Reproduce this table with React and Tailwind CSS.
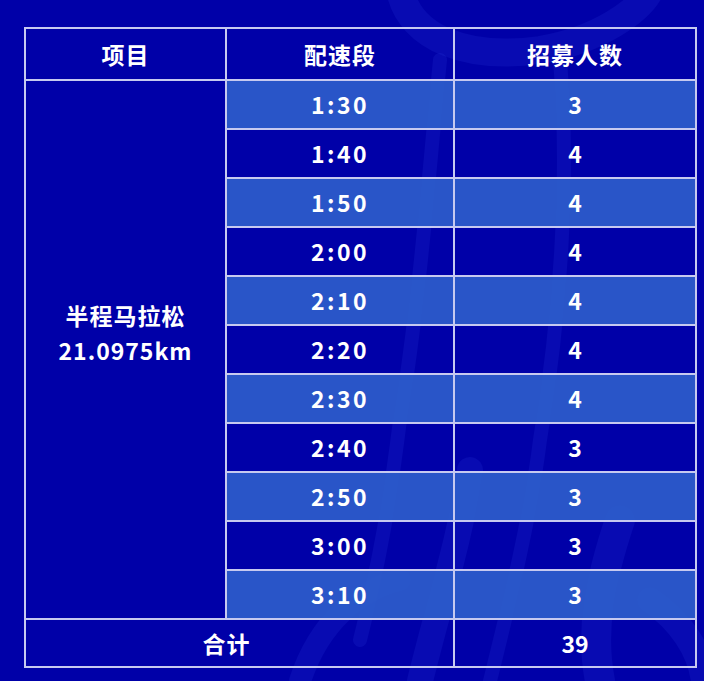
import React from "react";

const paces = [
  ["1:30", 3],
  ["1:40", 4],
  ["1:50", 4],
  ["2:00", 4],
  ["2:10", 4],
  ["2:20", 4],
  ["2:30", 4],
  ["2:40", 3],
  ["2:50", 3],
  ["3:00", 3],
  ["3:10", 3],
];

const font = { fontFamily: '"Noto Sans CJK SC", "Noto Sans", sans-serif' };

// faint runner silhouette behind the table
const Backdrop = () => (
  <svg className="absolute inset-0 w-full h-full" viewBox="0 0 704 681" fill="none">
    <g stroke="#3047e6" strokeOpacity="0.16" strokeLinecap="round">
      <path d="M400 -10 C410 40 470 60 540 50 C600 40 640 10 650 -10" strokeWidth="28" />
      <path d="M440 60 C430 160 420 300 400 420 C390 500 380 560 360 640" strokeWidth="14" />
      <path d="M560 60 C570 180 560 320 540 440 C530 520 510 600 490 681" strokeWidth="14" />
      <path d="M470 470 C460 540 440 600 420 681" strokeWidth="26" />
      <path d="M620 520 C600 580 590 630 600 681" strokeWidth="30" />
      <path d="M300 681 C320 620 360 590 400 580" strokeWidth="22" />
      <path d="M650 600 C680 620 700 650 704 681" strokeWidth="26" />
    </g>
  </svg>
);

export default function App() {
  return (
    <div className="relative w-[704px] h-[681px] overflow-hidden bg-[#0000a8] text-white" style={font}>
      <Backdrop />
      <div className="relative pt-[27px] pl-[24px]">
        <table className="border-collapse border-2 border-[#c6c9f0] table-fixed w-[671px]">
          <colgroup>
            <col className="w-[201px]" />
            <col className="w-[228px]" />
            <col className="w-[242px]" />
          </colgroup>
          <thead>
            <tr className="h-[52px]">
              <th className="border-2 border-[#c6c9f0] text-[23px] font-bold tracking-[1px] p-0">项目</th>
              <th className="border-2 border-[#c6c9f0] text-[23px] font-bold tracking-[1px] p-0">配速段</th>
              <th className="border-2 border-[#c6c9f0] text-[23px] font-bold tracking-[1px] p-0">招募人数</th>
            </tr>
          </thead>
          <tbody>
            {paces.map(([pace, count], i) => (
              <tr key={pace} className="h-[49px]">
                {i === 0 && (
                  <td
                    rowSpan={paces.length}
                    className="border-2 border-[#c6c9f0] p-0 text-center align-middle"
                  >
                    <div className="pb-[34px] text-[23px] font-semibold leading-[35px] tracking-[1px]">
                      <div>半程马拉松</div>
                      <div>21.0975km</div>
                    </div>
                  </td>
                )}
                <td
                  className={`border-2 border-[#c6c9f0] p-0 text-center text-[23px] font-semibold tracking-[2.5px] ${
                    i % 2 === 0 ? "bg-[#2d5ecb]/90" : ""
                  }`}
                >
                  {pace}
                </td>
                <td
                  className={`border-2 border-[#c6c9f0] p-0 text-center text-[23px] font-semibold ${
                    i % 2 === 0 ? "bg-[#2d5ecb]/90" : ""
                  }`}
                >
                  {count}
                </td>
              </tr>
            ))}
            <tr className="h-[48px]">
              <td colSpan={2} className="border-2 border-[#c6c9f0] p-0 pr-[26px] text-center text-[23px] font-bold tracking-[1px]">
                合计
              </td>
              <td className="border-2 border-[#c6c9f0] p-0 text-center text-[23px] font-semibold">39</td>
            </tr>
          </tbody>
        </table>
      </div>
    </div>
  );
}
